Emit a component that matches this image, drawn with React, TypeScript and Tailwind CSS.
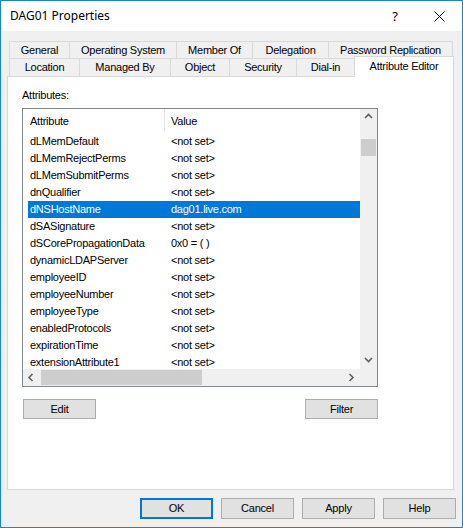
import React from 'react';

const row1 = [
  { label: 'General', w: 'w-[60px]' },
  { label: 'Operating System', w: 'w-[107px]' },
  { label: 'Member Of', w: 'w-[76px]' },
  { label: 'Delegation', w: 'w-[76px]' },
  { label: 'Password Replication', w: 'w-[125px] border-r' },
];

const row2 = [
  { label: 'Location', w: 'w-[70px]' },
  { label: 'Managed By', w: 'w-[91px]' },
  { label: 'Object', w: 'w-[59px]' },
  { label: 'Security', w: 'w-[67px]' },
  { label: 'Dial-in', w: 'w-[58px]' },
];

const attrs: [string, string][] = [
  ['dLMemDefault', '<not set>'],
  ['dLMemRejectPerms', '<not set>'],
  ['dLMemSubmitPerms', '<not set>'],
  ['dnQualifier', '<not set>'],
  ['dNSHostName', 'dag01.live.com'],
  ['dSASignature', '<not set>'],
  ['dSCorePropagationData', '0x0 = ( )'],
  ['dynamicLDAPServer', '<not set>'],
  ['employeeID', '<not set>'],
  ['employeeNumber', '<not set>'],
  ['employeeType', '<not set>'],
  ['enabledProtocols', '<not set>'],
  ['expirationTime', '<not set>'],
  ['extensionAttribute1', '<not set>'],
];

const Chevron: React.FC<{ dir: 'up' | 'down' | 'left' | 'right' }> = ({ dir }) => {
  const pts = {
    up: '1,5 4.5,1.5 8,5',
    down: '1,2 4.5,5.5 8,2',
    left: '5.5,1 2,4.5 5.5,8',
    right: '2.5,1 6,4.5 2.5,8',
  }[dir];
  return (
    <svg width="9" height="9" viewBox="0 0 9 9">
      <polyline points={pts} fill="none" stroke="#606060" strokeWidth="1.6" />
    </svg>
  );
};

const Btn: React.FC<{ label: string, focused?: boolean, h?: string }> = ({ label, focused, h = 'h-[20px]' }) => (
  <div className={`w-[73px] ${h} flex items-center justify-center bg-[#e1e1e1] text-[11px] tracking-[-0.2px] text-black ${focused ? 'border-2 border-[#0078d7]' : 'border border-[#adadad]'}`}>
    {label}
  </div>
);

const App: React.FC = () => {
  return (
    <div className="w-[463px] h-[528px] flex flex-col border border-[#1883d7] bg-[#f0f0f0] font-['Liberation_Sans',Arial,sans-serif] text-black overflow-hidden">
      {/* title bar */}
      <div className="h-[30px] bg-white flex items-center pl-[9px] shrink-0">
        <span className="font-['Noto_Sans',sans-serif] text-[12px] leading-none">DAG01 Properties</span>
        <span className="ml-auto font-['Noto_Sans',sans-serif] text-[13px] leading-none mr-[36px]">?</span>
        <svg width="11" height="11" viewBox="0 0 11 11" className="mr-[17px]">
          <line x1="0.5" y1="0.5" x2="10.5" y2="10.5" stroke="#000" strokeWidth="1" />
          <line x1="10.5" y1="0.5" x2="0.5" y2="10.5" stroke="#000" strokeWidth="1" />
        </svg>
      </div>

      {/* body */}
      <div className="flex-1 flex flex-col pt-[10px]">
        {/* tabs */}
        <div className="flex h-[17px] ml-[8px] text-[11px] tracking-[-0.25px]">
          {row1.map((t) => (
            <div key={t.label} className={`${t.w} h-[17px] border-l border-t border-[#d9d9d9] flex items-center justify-center leading-none`}>
              {t.label}
            </div>
          ))}
        </div>
        <div className="flex items-end h-[18px] ml-[8px] text-[11px] tracking-[-0.25px]">
          {row2.map((t) => (
            <div key={t.label} className={`${t.w} h-[18px] border-l border-t border-[#d9d9d9] flex items-center justify-center leading-none`}>
              {t.label}
            </div>
          ))}
          <div className="relative z-10 w-[100px] h-[21px] -mb-px bg-white border-l border-t border-r border-[#d9d9d9] flex items-start justify-center pt-[4px] leading-none">
            Attribute Editor
          </div>
        </div>

        {/* panel */}
        <div className="ml-[6px] w-[447px] h-[414px] bg-white border border-[#d9d9d9] flex flex-col pl-[14px] pt-[12px]">
          <div className="h-[13px] text-[11px] tracking-[-0.25px] leading-[13px]">Attributes:</div>

          {/* list box */}
          <div className="mt-[6px] w-[356px] h-[279px] border border-[#828790] flex flex-col text-[11px] tracking-[-0.25px]">
            <div className="flex h-[260px]">
              <div className="w-[337px] overflow-hidden">
                <div className="h-[24px] flex items-center">
                  <div className="w-[141px] pl-[7px]">Attribute</div>
                  <div className="w-px h-[22px] self-start bg-[#e5e5e5]" />
                  <div className="pl-[6px]">Value</div>
                </div>
                {attrs.map(([a, v]) => {
                  const sel = a === 'dNSHostName';
                  return (
                    <div
                      key={a}
                      className={`ml-[5px] h-[17px] flex items-center leading-none ${sel ? 'bg-[#0078d7] text-white' : ''}`}
                    >
                      <div className="w-[143px] pl-[2px] whitespace-nowrap">{a}</div>
                      <div className="whitespace-nowrap">{v}</div>
                    </div>
                  );
                })}
              </div>
              {/* vertical scrollbar */}
              <div className="w-[17px] bg-[#f0f0f0] flex flex-col">
                <div className="h-[17px] flex items-center justify-center">
                  <Chevron dir="up" />
                </div>
                <div className="mt-[13px] mx-px h-[17px] bg-[#cdcdcd]" />
                <div className="mt-auto h-[17px] flex items-center justify-center">
                  <Chevron dir="down" />
                </div>
              </div>
            </div>
            {/* horizontal scrollbar */}
            <div className="flex h-[17px]">
              <div className="w-[337px] bg-[#f0f0f0] flex items-stretch">
                <div className="w-[17px] flex items-center justify-center">
                  <Chevron dir="left" />
                </div>
                <div className="ml-px my-px w-[161px] bg-[#cdcdcd]" />
                <div className="ml-auto w-[17px] flex items-center justify-center">
                  <Chevron dir="right" />
                </div>
              </div>
              <div className="w-[17px] bg-[#f0f0f0]" />
            </div>
          </div>

          <div className="mt-[12px] w-[356px] pl-px flex justify-between">
            <Btn label="Edit" />
            <Btn label="Filter" />
          </div>
        </div>

        {/* dialog buttons */}
        <div className="mt-[8px] flex justify-end gap-[8px] pr-[6px]">
          <Btn label="OK" focused h="h-[21px]" />
          <Btn label="Cancel" h="h-[21px]" />
          <Btn label="Apply" h="h-[21px]" />
          <Btn label="Help" h="h-[21px]" />
        </div>
      </div>
    </div>
  );
};

export default App;
